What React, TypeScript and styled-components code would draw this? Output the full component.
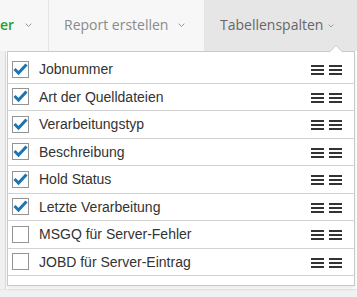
import styled, { createGlobalStyle } from 'styled-components';

const GlobalStyle = createGlobalStyle`
    html, body {
        margin: 0;
        padding: 0;
    }
    body {
        width: 357px;
        height: 297px;
        overflow: hidden;
        background: #fff;
    }
`;

const Page = styled.div`
    position: relative;
    width: 357px;
    height: 297px;
    display: flex;
    flex-direction: column;
    background: #fff;
    overflow: hidden;
`;

const TopBar = styled.nav`
    display: flex;
    height: 51px;
    background: #f7f7f7;
    font-family: 'Open Sans', sans-serif;
    font-size: 14px;
`;

const NavItem = styled.div<{ $active?: boolean; $width?: number; $pad: number; $gap: number }>`
    display: flex;
    align-items: center;
    gap: ${(p) => p.$gap}px;
    box-sizing: border-box;
    ${(p) => (p.$width ? `width: ${p.$width}px;` : 'flex: 1;')}
    padding-left: ${(p) => p.$pad}px;
    padding-bottom: 2px;
    background: ${(p) => (p.$active ? '#e6e6e6' : 'transparent')};
    color: ${(p) => (p.$active ? '#666' : '#8a8a8a')};
    border-right: 1px solid ${(p) => (p.$active ? 'transparent' : '#e4e4e4')};
    white-space: nowrap;
`;

const GreenLabel = styled.span`
    color: #2aa12a;
    font-weight: 600;
`;

const Chevron = styled.svg`
    flex: none;
    margin-top: 2px;
`;

const Content = styled.div`
    flex: 1;
    display: flex;
`;

const SideStrip = styled.div`
    width: 5px;
    background: #f0f0f0;
    border-right: 1px solid #dedede;
`;

const Footer = styled.div`
    height: 7px;
    background: #f1f1f1;
    border-top: 1px solid #e6e6e6;
`;

const Panel = styled.div`
    position: absolute;
    top: 51px;
    left: 7px;
    width: 348px;
    box-sizing: border-box;
    background: #fff;
    border: 1px solid #c9c9c9;
    box-shadow: 0 3px 4px rgba(0, 0, 0, 0.08);
    padding: 4px 0 9px;
    font-family: 'Liberation Sans', Arial, sans-serif;
    font-size: 14px;
    color: #333;

    &::before,
    &::after {
        content: '';
        position: absolute;
        left: 321px;
        border-left: 7px solid transparent;
        border-right: 7px solid transparent;
    }
    &::before {
        top: -7px;
        border-bottom: 7px solid #c9c9c9;
    }
    &::after {
        top: -6px;
        border-bottom: 7px solid #fff;
    }
`;

const Row = styled.div`
    display: flex;
    align-items: center;
    height: 26.5px;
    padding: 0 12px 0 4px;
    border-bottom: 1px solid #d2d2d2;
`;

const Box = styled.span`
    flex: none;
    display: flex;
    align-items: center;
    justify-content: center;
    width: 17px;
    height: 17px;
    box-sizing: border-box;
    border: 1px solid #949494;
    background: #fff;
    margin-right: 10px;
`;

const Label = styled.span`
    flex: 1;
    white-space: nowrap;
`;

const Handles = styled.span`
    display: flex;
    gap: 5px;
    margin-top: 2px;
`;

function ChevronDown({ size }: { size: number }) {
    return (
        <Chevron width={size} height={size * 0.6} viewBox="0 0 10 6">
            <path d="M1 1 L5 5 L9 1" fill="none" stroke="#8a8a8a" strokeWidth="1.3" />
        </Chevron>
    );
}

function Bars() {
    return (
        <svg width="13" height="10" viewBox="0 0 13 10">
            <rect x="0" y="0" width="13" height="2" fill="#333" />
            <rect x="0" y="4" width="13" height="2" fill="#333" />
            <rect x="0" y="8" width="13" height="2" fill="#333" />
        </svg>
    );
}

function Check() {
    return (
        <svg width="15" height="13" viewBox="0 0 15 13">
            <path d="M1.5 6 L5.5 10 L13.5 1.5" fill="none" stroke="#1c74b3" strokeWidth="3" />
        </svg>
    );
}

export default function App() {
    const columns = [
        { name: 'Jobnummer', checked: true },
        { name: 'Art der Quelldateien', checked: true },
        { name: 'Verarbeitungstyp', checked: true },
        { name: 'Beschreibung', checked: true },
        { name: 'Hold Status', checked: true },
        { name: 'Letzte Verarbeitung', checked: true },
        { name: 'MSGQ für Server-Fehler', checked: false },
        { name: 'JOBD für Server-Eintrag', checked: false }
    ];

    return (
        <Page>
            <GlobalStyle />
            <TopBar>
                <NavItem $width={49} $pad={0} $gap={11}>
                    <GreenLabel>er</GreenLabel>
                    <ChevronDown size={7} />
                </NavItem>
                <NavItem $width={156} $pad={15} $gap={10}>
                    Report erstellen
                    <ChevronDown size={7} />
                </NavItem>
                <NavItem $active $pad={15} $gap={5}>
                    Tabellenspalten
                    <ChevronDown size={6} />
                </NavItem>
            </TopBar>
            <Content>
                <SideStrip />
            </Content>
            <Footer />
            <Panel>
                {columns.map((col) => (
                    <Row key={col.name}>
                        <Box>{col.checked && <Check />}</Box>
                        <Label>{col.name}</Label>
                        <Handles>
                            <Bars />
                            <Bars />
                        </Handles>
                    </Row>
                ))}
            </Panel>
        </Page>
    );
}
